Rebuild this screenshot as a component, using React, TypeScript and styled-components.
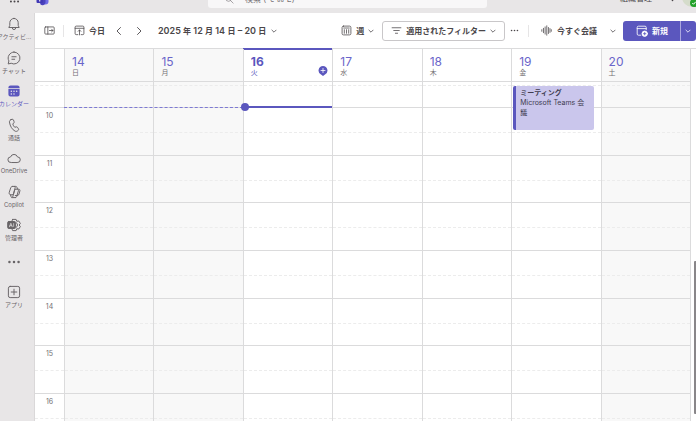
import React from "react";
import styled, { createGlobalStyle, css } from "styled-components";

const accent = "#5b57be";
const line = "#dbdbdc";

const Global = createGlobalStyle`
  * { box-sizing: border-box; }
  html, body, #root { height: 100%; }
  body {
    margin: 0;
    overflow: hidden;
    background: #e8e6e7;
    color: #4a4649;
    font-family: Inter, "Noto Sans CJK JP", sans-serif;
    font-size: 8px;
  }
  button, input { font: inherit; color: inherit; }
  button { border: 0; padding: 0; background: none; }
  svg { display: block; flex: none; }
`;

const Page = styled.div`
  display: flex;
  flex-direction: column;
  height: 100vh;
  overflow: hidden;
`;

const TitleBar = styled.header`
  display: grid;
  grid-template-columns: 208fr 279fr 209fr;
  align-items: end;
  align-content: end;
  flex: none;
  height: 13px;
  overflow: hidden;
`;

const Brand = styled.div`
  display: flex;
  align-items: center;
  gap: 16px;
  height: 24px;
  padding-left: 9px;
`;

const SearchBox = styled.label`
  display: flex;
  align-items: center;
  gap: 11px;
  height: 18px;
  margin-bottom: 5px;
  padding-left: 17px;
  border-radius: 3px;
  background: #f8f7f8;
  color: #777377;
`;

const SearchInput = styled.input`
  flex: 1;
  min-width: 0;
  height: 18px;
  padding: 0;
  border: 0;
  outline: 0;
  background: transparent;
  &::placeholder { color: #777377; opacity: 1; }
`;

const Account = styled.div`
  display: flex;
  align-items: center;
  justify-content: flex-end;
  gap: 5px;
  height: 20px;
  margin-bottom: 6px;
`;

const Avatar = styled.span`
  position: relative;
  width: 14px;
  height: 20px;
  border-radius: 10px 0 0 10px;
  background: #d5dccb;
`;

const Presence = styled.span`
  position: absolute;
  right: -2px;
  bottom: 0;
  color: #fff;
`;

const Shell = styled.div`
  display: flex;
  flex: 1;
  min-height: 0;
`;

const Rail = styled.nav`
  display: flex;
  flex-direction: column;
  flex: none;
  width: 35px;
  padding-top: 4px;
  overflow: hidden;
  border-right: 1px solid #dad8d9;
`;

const RailButton = styled.button<{ $active?: boolean; $before?: number }>`
  display: flex;
  flex-direction: column;
  align-items: center;
  flex: none;
  height: 33px;
  width: 28px;
  gap: 2px;
  margin-top: ${(p) => p.$before ?? 0}px;
  color: ${(p) => (p.$active ? accent : "#686467")};
`;

const MoreButton = styled(RailButton)`
  height: 30px;
`;

const RailLabel = styled.span`
  font-size: 6px;
  line-height: 8px;
  white-space: nowrap;
`;

const Main = styled.main`
  display: flex;
  flex-direction: column;
  flex: 1;
  min-width: 0;
  background: #fff;
`;

const Toolbar = styled.div`
  display: flex;
  align-items: center;
  justify-content: space-between;
  flex: none;
  height: 36px;
  padding-left: 9px;
  border-bottom: 1px solid ${line};
`;

const Group = styled.div`
  display: flex;
  align-items: center;
`;

const ToolButton = styled.button<{ $gap?: number; $after?: number }>`
  display: flex;
  align-items: center;
  height: 20px;
  gap: ${(p) => p.$gap ?? 4}px;
  margin-right: ${(p) => p.$after ?? 0}px;
  font-weight: 700;
  white-space: nowrap;
`;

const DateRange = styled.span`
  font-size: 9px;
  font-weight: 600;
`;

const Unit = styled.span`
  font-size: 8px;
`;

const FilterButton = styled(ToolButton)`
  padding: 0 8px;
  border: 1px solid #c9c7c9;
  border-radius: 3px;
`;

const Divider = styled.span<{ $after: number }>`
  width: 1px;
  height: 12px;
  margin-right: ${(p) => p.$after}px;
  background: #e6e5e6;
`;

const NewGroup = styled.div`
  display: flex;
  height: 20px;
  border-radius: 3px;
  overflow: hidden;
  background: ${accent};
  color: #fff;
`;

const NewButton = styled(ToolButton)`
  padding: 0 12px 0 13px;
`;

const NewMenu = styled(ToolButton)`
  padding: 0 5px 0 4px;
  border-left: 1px solid #aaa7df;
`;

const Calendar = styled.section`
  display: flex;
  flex: 1;
  min-height: 0;
`;

const Board = styled.div`
  display: flex;
  flex-direction: column;
  flex: 1;
  min-width: 0;
  border-right: 1px solid ${line};
`;

const columns = css`
  display: grid;
  grid-template-columns: 29px repeat(7, minmax(0, 1fr));
`;

const DayHeader = styled.div`
  ${columns}
  flex: none;
  height: 33px;
  border-bottom: 1px solid ${line};
`;

const Day = styled.div<{ $off?: boolean; $today?: boolean }>`
  position: relative;
  padding: 5px 0 0 7px;
  border-left: 1px solid ${line};
  background: ${(p) => (p.$off ? "#f8f8f8" : "#fff")};
  box-shadow: ${(p) => (p.$today ? `inset 0 1px ${accent}, 0 -1px ${accent}` : "none")};
  color: ${(p) => (p.$today ? accent : "#747074")};
`;

const DayNumber = styled.div<{ $today?: boolean }>`
  color: ${(p) => (p.$today ? accent : "#6a65ca")};
  font-size: 12px;
  line-height: 15px;
  font-weight: ${(p) => (p.$today ? 700 : 400)};
`;

const DayName = styled.div`
  font-size: 7px;
  line-height: 8px;
`;

const DayMark = styled.span`
  position: absolute;
  right: 4px;
  bottom: 5px;
  color: ${accent};
`;

const Hours = styled.div`
  ${columns}
  grid-template-rows: 26px repeat(6, minmax(40px, 1fr)) 27px;
  position: relative;
  flex: 1;
  min-height: 0;
  overflow: hidden;
`;

const Slot = styled.div<{ $off?: boolean; $time?: boolean; $edge?: "first" | "last" }>`
  display: flex;
  flex-direction: column;
  min-height: 0;
  border-left: ${(p) => (p.$time ? "0" : `1px solid ${line}`)};
  border-bottom: ${(p) => (p.$edge === "last" ? "0" : `1px solid ${line}`)};
  background: ${(p) => (p.$off ? "#f8f8f8" : "#fff")};
  &::before {
    content: "";
    flex: none;
    height: ${(p) => (p.$edge === "first" ? "3px" : "24px")};
    border-bottom: 1px dashed #ececec;
  }
`;

const HourText = styled.span`
  order: -1;
  height: 12px;
  margin-bottom: -12px;
  padding-top: 3px;
  color: #747074;
  font-size: 7px;
  line-height: 9px;
  text-align: center;
`;

const NowPast = styled.div`
  z-index: 2;
  grid-row: 1;
  grid-column: 2 / 4;
  align-self: end;
  border-top: 1px dashed #7d79d4;
`;

const NowToday = styled.div`
  position: relative;
  z-index: 2;
  grid-row: 1;
  grid-column: 4;
  align-self: end;
  height: 2px;
  background: ${accent};
  &::before {
    content: "";
    position: absolute;
    left: -2px;
    top: -3px;
    width: 8px;
    height: 8px;
    border-radius: 50%;
    background: ${accent};
  }
`;

const Meeting = styled.button`
  z-index: 1;
  grid-row: 1 / 3;
  grid-column: 7;
  align-self: start;
  height: 44px;
  margin: 4px 7px 0 2px;
  padding: 2px 4px;
  display: flex;
  flex-direction: column;
  border-left: 3px solid ${accent};
  border-radius: 2px;
  background: #cac6ec;
  color: #403c50;
  font-size: 7px;
  line-height: 10px;
  text-align: left;
`;

const ScrollTrack = styled.div`
  display: flex;
  flex-direction: column;
  flex: none;
  width: 5px;
  padding-left: 3px;
`;

const ScrollThumb = styled.div`
  flex: none;
  height: 41%;
  margin-top: auto;
  margin-bottom: 7px;
  border-radius: 1px 0 0 1px;
  background: #898689;
`;

type IconProps = { size?: number; children: React.ReactNode; w?: number };
const Icon = ({ size = 14, children, w = 1.4 }: IconProps) => (
  <svg width={size} height={size} viewBox="0 0 20 20" fill="none" stroke="currentColor" strokeWidth={w} strokeLinecap="round" strokeLinejoin="round" aria-hidden="true">
    {children}
  </svg>
);

const Chevron = ({ dir = "down" }: { dir?: "down" | "left" | "right" }) => (
  <Icon size={dir === "down" ? 6 : 10} w={dir === "down" ? 2.6 : 1.8}>
    <path d={dir === "down" ? "M3 7l7 7 7-7" : dir === "left" ? "M13 3l-7 7 7 7" : "M7 3l7 7-7 7"} />
  </Icon>
);

const Dots = ({ size = 12, vertical }: { size?: number; vertical?: boolean }) => (
  <Icon size={size} w={0}>
    <g fill="currentColor">
      {[3.5, 10, 16.5].map((p) => (
        <circle key={p} cx={vertical ? 10 : p} cy={vertical ? p : 10} r="1.8" />
      ))}
    </g>
  </Icon>
);

const BellIcon = () => (
  <Icon>
    <path d="M10 2a6 6 0 0 0-6 6v4l-1.4 3h14.8L16 12V8a6 6 0 0 0-6-6zM7.5 15.5a2.5 2.5 0 0 0 5 0" />
  </Icon>
);
const ChatIcon = () => (
  <Icon>
    <path d="M10 1.5a8.5 8.5 0 1 1-4 16L1.7 18.5l1-4.3A8.5 8.5 0 0 1 10 1.5zM7 8.2h6M7 11.8h4" />
  </Icon>
);
const CalendarIcon = () => (
  <Icon w={0}>
    <path fill="currentColor" d="M2 6V5a3 3 0 0 1 3-3h10a3 3 0 0 1 3 3v1zM2 7.2h16V15a3 3 0 0 1-3 3H5a3 3 0 0 1-3-3z" />
    <g fill="#e8e6e7">
      <circle cx="6.2" cy="10.5" r="1.1" />
      <circle cx="10" cy="10.5" r="1.1" />
      <circle cx="13.8" cy="10.5" r="1.1" />
      <circle cx="6.2" cy="14.2" r="1.1" />
      <circle cx="10" cy="14.2" r="1.1" />
    </g>
  </Icon>
);
const PhoneIcon = () => (
  <Icon>
    <path d="M5.6 2.4l1.7-.6c.8-.2 1.6.2 1.9 1l.9 2.4c.2.7.1 1.4-.4 1.9L8.2 8.6c.5 1.9 1.5 3.4 2.9 4.700l2-.6c.7-.2 1.4 0 1.8.6l1.4 2c.5.7.4 1.6-.2 2.2l-.9.8c-1 .9-2.4 1.100-3.6.5C7.600 16.800 4.300 11.800 3.500 5.800c-.2-1.500.7-2.900 2.100-3.400z" />
  </Icon>
);
const CloudIcon = () => (
  <Icon>
    <path d="M5.5 16.5a4 4 0 0 1-.4-8A5.200 5.200 0 0 1 15 8.500a4 4 0 0 1 0 8z" />
  </Icon>
);
const CopilotIcon = () => (
  <Icon>
    <path d="M8 2h4.500c1 0 1.500.6 1.800 1.500L15 6h1.500c1.600 0 2.300 1 1.900 2.500l-1.300 4.600c-.4 1.300-1.300 2-2.600 2h-2.700M8 2C6.700 2 5.700 2.700 5.300 4L3.200 10.500C2.700 12.500 3.500 14 5 14M12 18H7.500c-1 0-1.500-.6-1.800-1.500L5 14h2.300c1 0 1.700-.6 2-1.600L11.600 4c.3-1.200.3-2-.6-2M12 18c1.200 0 1.700-.8 2-2l2.200-7.500C16.600 7 16 6 15 6h-2.200c-1 0-1.600.5-1.900 1.500L8.500 16c-.3 1.100-.6 2-1.300 2" />
  </Icon>
);
const AdminIcon = () => (
  <Icon>
    <path d="M8 2h5l1 2.700 2.800-.5 2.300 3.700L17.300 10l1.800 2.200-2.300 3.600-2.800-.5-1 2.700H8l-1-2.700M8 2L7 4.500M13 6.500a4 4 0 0 1 0 7" />
    <rect x="1" y="5" width="11" height="10" rx="1.500" fill="currentColor" />
    <path d="M3.500 12.500l2-5 2 5M4.300 11h2.400M9.500 8v4" stroke="#e8e6e7" strokeWidth="1" />
  </Icon>
);
const AppsIcon = () => (
  <Icon>
    <rect x="2" y="2" width="16" height="16" rx="2.500" />
    <path d="M10 6v8M6 10h8" />
  </Icon>
);
const PanelIcon = () => (
  <Icon size={11}>
    <rect x="1.500" y="3.500" width="17" height="13" rx="1.500" />
    <path d="M7 3.500v13M10 10h6M13.800 7.500l2.500 2.500-2.500 2.500" />
  </Icon>
);
const TodayIcon = () => (
  <Icon size={11}>
    <path d="M7 17.500H4a2 2 0 0 1-2-2V4a2 2 0 0 1 2-2h12a2 2 0 0 1 2 2v11.500a2 2 0 0 1-2 2h-3M2 6h16M10 9v9M7.500 11.500L10 9l2.500 2.500" />
  </Icon>
);
const WeekIcon = () => (
  <Icon size={11}>
    <rect x="2" y="2" width="16" height="16" rx="2.500" />
    <path d="M5 5.500h10M6 8.500v6.500M10 8.500v6.500M14 8.500v6.500" />
  </Icon>
);
const FilterIcon = () => (
  <Icon size={11}>
    <path d="M2 5h16M5 10h10M8 15h4" />
  </Icon>
);
const WaveIcon = () => (
  <Icon size={11}>
    <path d="M1.500 8.500v3M4.500 6v8M7.500 3.500v13M10.500 1.500v17M13.500 4.500v11M16.300 6.500v7M18.700 8.500v3" />
  </Icon>
);
const NewEventIcon = () => (
  <Icon size={12}>
    <path d="M8 17H4a2 2 0 0 1-2-2V4a2 2 0 0 1 2-2h11a2 2 0 0 1 2 2v4M2 6h15" />
    <circle cx="14.500" cy="14.500" r="4.500" fill="currentColor" />
    <path d="M14.500 12.500v4M12.500 14.500h4" stroke={accent} />
  </Icon>
);

const TeamsLogo = () => (
  <svg width="13" height="14" viewBox="0 0 26 28" aria-hidden="true">
    <circle cx="20" cy="6" r="4" fill="#7b83eb" />
    <rect x="7" y="5" width="18" height="16" rx="6" fill="#6f6be5" />
    <path d="M9 7h10v10a6 6 0 0 1-10 4z" fill="#4a42bd" />
    <rect x="1" y="6" width="13" height="12" rx="2" fill="#4038b5" />
    <path d="M4 9h7M7.500 9v6" stroke="#fff" strokeWidth="2" />
  </svg>
);

const apps = [
  { label: "アクティビ...", icon: <BellIcon /> },
  { label: "チャット", icon: <ChatIcon />, before: 1 },
  { label: "カレンダー", icon: <CalendarIcon />, active: true },
  { label: "通話", icon: <PhoneIcon />, before: 1 },
  { label: "OneDrive", icon: <CloudIcon /> },
  { label: "Copilot", icon: <CopilotIcon />, before: 1 },
  { label: "管理者", icon: <AdminIcon /> },
];

const days = [
  { n: 14, name: "日", off: true },
  { n: 15, name: "月", off: true },
  { n: 16, name: "火", today: true },
  { n: 17, name: "水" },
  { n: 18, name: "木" },
  { n: 19, name: "金" },
  { n: 20, name: "土", off: true },
];

const hours = [9, 10, 11, 12, 13, 14, 15, 16];

export default function App() {
  return (
    <>
      <Global />
      <Page>
        <TitleBar>
          <Brand>
            <Dots size={11} />
            <TeamsLogo />
          </Brand>
          <SearchBox>
            <Icon size={9}>
              <circle cx="8" cy="8" r="6" />
              <path d="M12.500 12.500L18 18" />
            </Icon>
            <SearchInput aria-label="検索" placeholder="検索 (⌥ ⌘ E)" />
          </SearchBox>
          <Account>
            <span>組織管理</span>
            <Chevron />
            <Dots size={9} vertical />
            <Avatar>
              <Presence>
                <svg width="8" height="8" viewBox="0 0 16 16" aria-hidden="true">
                  <circle cx="8" cy="8" r="8" fill="#22a12a" />
                  <path d="M4.500 8l2.500 2.500 4.500-5" fill="none" stroke="currentColor" strokeWidth="2" />
                </svg>
              </Presence>
            </Avatar>
          </Account>
        </TitleBar>
        <Shell>
          <Rail aria-label="アプリ">
            {apps.map((a) => (
              <RailButton key={a.label} $active={a.active} $before={a.before}>
                {a.icon}
                <RailLabel>{a.label}</RailLabel>
              </RailButton>
            ))}
            <MoreButton aria-label="その他" $before={4}>
              <Dots size={14} />
            </MoreButton>
            <RailButton>
              <AppsIcon />
              <RailLabel>アプリ</RailLabel>
            </RailButton>
          </Rail>
          <Main>
            <Toolbar>
              <Group>
                <ToolButton $after={8} aria-label="パネル"><PanelIcon /></ToolButton>
                <Divider $after={10} />
                <ToolButton $after={9}><TodayIcon />今日</ToolButton>
                <ToolButton $after={10} aria-label="前の週"><Chevron dir="left" /></ToolButton>
                <ToolButton $after={14} aria-label="次の週"><Chevron dir="right" /></ToolButton>
                <ToolButton $gap={5}>
                  <DateRange>
                    2025 <Unit>年</Unit> 12 <Unit>月</Unit> 14 <Unit>日</Unit> – 20 <Unit>日</Unit>
                  </DateRange>
                  <Chevron />
                </ToolButton>
              </Group>
              <Group>
                <ToolButton $after={8}><WeekIcon />週<Chevron /></ToolButton>
                <FilterButton $after={5}><FilterIcon />適用されたフィルター<Chevron /></FilterButton>
                <ToolButton $after={9} aria-label="その他のオプション"><Dots size={9} /></ToolButton>
                <Divider $after={12} />
                <ToolButton $gap={5} $after={13}><WaveIcon />今すぐ会議</ToolButton>
                <ToolButton $after={7} aria-label="会議オプション"><Chevron /></ToolButton>
                <NewGroup>
                  <NewButton><NewEventIcon />新規</NewButton>
                  <NewMenu aria-label="新規メニュー"><Chevron /></NewMenu>
                </NewGroup>
              </Group>
            </Toolbar>
            <Calendar>
              <Board>
                <DayHeader>
                  <span />
                  {days.map((d) => (
                    <Day key={d.n} $off={d.off} $today={d.today}>
                      <DayNumber $today={d.today}>{d.n}</DayNumber>
                      <DayName>{d.name}</DayName>
                      {d.today && (
                        <DayMark>
                          <Icon size={10} w={0}>
                            <path fill="currentColor" d="M10 0a9 9 0 0 1 4 17l-4 3-4-3A9 9 0 0 1 10 0z" />
                            <path d="M10 5v8M6 9h8" stroke="#fff" strokeWidth="1.600" />
                          </Icon>
                        </DayMark>
                      )}
                    </Day>
                  ))}
                </DayHeader>
                <Hours>
                  {hours.map((h, row) => {
                    const edge = row === 0 ? "first" : row === hours.length - 1 ? "last" : undefined;
                    return (
                      <React.Fragment key={h}>
                        <Slot $time $edge={edge} style={{ gridRow: row + 1, gridColumn: 1 }}>
                          {row > 0 && <HourText>{h}</HourText>}
                        </Slot>
                        {days.map((d, col) => (
                          <Slot key={d.n} $off={d.off} $edge={edge} style={{ gridRow: row + 1, gridColumn: col + 2 }} />
                        ))}
                      </React.Fragment>
                    );
                  })}
                  <NowPast />
                  <NowToday />
                  <Meeting>
                    <strong>ミーティング</strong>
                    <span>Microsoft Teams 会議</span>
                  </Meeting>
                </Hours>
              </Board>
              <ScrollTrack><ScrollThumb /></ScrollTrack>
            </Calendar>
          </Main>
        </Shell>
      </Page>
    </>
  );
}
